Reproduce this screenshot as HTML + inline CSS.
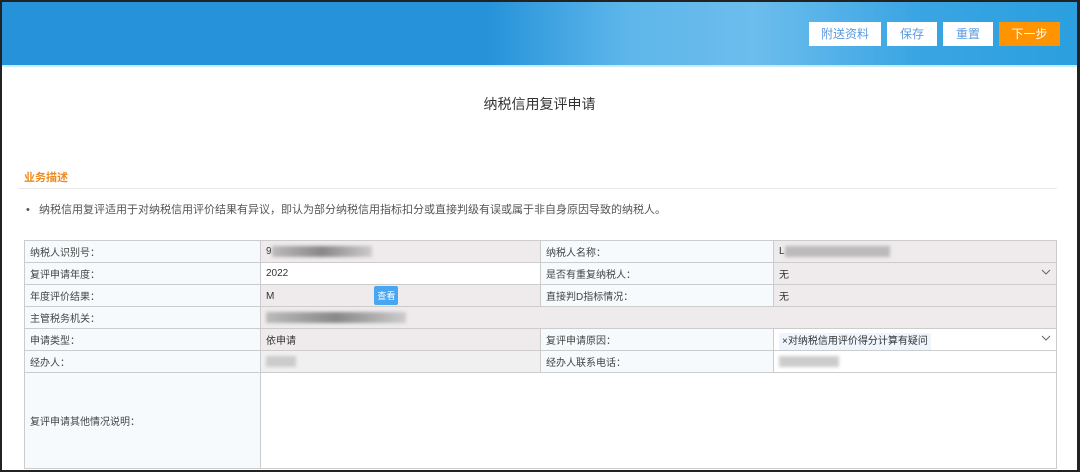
<!DOCTYPE html>
<html><head><meta charset="utf-8"><style>
*{margin:0;padding:0;box-sizing:border-box}
body{width:1080px;height:472px;overflow:hidden;background:#222;font-family:"Liberation Sans","Noto Sans CJK SC",sans-serif;position:relative}
.frame{position:absolute;left:2px;top:2px;width:1075px;height:468px;background:#fff;overflow:hidden}
.hdr{position:absolute;left:0;top:0;width:100%;height:63px;background:linear-gradient(90deg,#2592d9 0%,#2592d9 45%,#5db6ea 58%,#6cbdec 70%,#3aa5e3 85%,#2b9fdf 100%)}
.hdr2{position:absolute;left:0;top:63px;width:100%;height:2px;background:#c9ecf8}
.btn{position:absolute;top:20px;height:24px;background:#fff;color:#5a9be0;font-size:12px;line-height:24px;text-align:center}
.title{position:absolute;top:92px;left:0;width:100%;text-align:center;font-size:14px;color:#333}
.sec{position:absolute;left:22px;top:167px;font-size:11px;color:#f08a1c;font-weight:bold}
.line{position:absolute;left:17px;top:186px;width:1038px;height:1px;background:#e8e8e8}
.desc{position:absolute;left:24px;top:199px;font-size:11px;color:#555}
table{position:absolute;left:22px;top:238px;border-collapse:collapse;font-size:10px;color:#333}
td{border:1px solid #ccc;height:22px;padding:0 5px;vertical-align:middle}
.l{background:#f6fafd;color:#444}
.g{background:#efebec}
.blur{display:inline-block;height:11px;background:linear-gradient(90deg,#bbb,#888,#ccc);filter:blur(1.5px);vertical-align:middle}
.chev{float:right;margin-top:3px}
</style></head><body><div class="frame">
<div class="hdr"></div><div class="hdr2"></div>
<div class="btn" style="left:807px;width:72px">附送资料</div>
<div class="btn" style="left:885px;width:50px">保存</div>
<div class="btn" style="left:941px;width:50px">重置</div>
<div class="btn" style="left:997px;width:61px;background:#ff9300;color:#fff">下一步</div>
<div class="title">纳税信用复评申请</div>
<div class="sec">业务描述</div>
<div class="line"></div>
<div class="desc">• &nbsp;&nbsp;纳税信用复评适用于对纳税信用评价结果有异议，即认为部分纳税信用指标扣分或直接判级有误或属于非自身原因导致的纳税人。</div>
<table>
<tr><td class="l" style="width:236px">纳税人识别号：</td><td class="g" style="width:280px">9<span class="blur" style="width:100px"></span></td><td class="l" style="width:233px">纳税人名称：</td><td class="g" style="width:283px">L<span class="blur" style="width:105px;background:#bbb"></span></td></tr>
<tr><td class="l">复评申请年度：</td><td>2022</td><td class="l">是否有重复纳税人：</td><td class="g">无<svg class="chev" width="10" height="6" viewBox="0 0 10 6"><path d="M1 1L5 5L9 1" stroke="#666" fill="none"/></svg></td></tr>
<tr><td class="l">年度评价结果：</td><td class="g">M<span style="display:inline-block;margin-left:100px;background:#4aa6f0;color:#fff;padding:3px 3px;font-size:9px;border-radius:2px">查看</span></td><td class="l">直接判D指标情况：</td><td class="g">无</td></tr>
<tr><td class="l">主管税务机关：</td><td class="g" colspan="3"><span class="blur" style="width:140px"></span></td></tr>
<tr><td class="l">申请类型：</td><td class="g">依申请</td><td class="l">复评申请原因：</td><td><span style="background:#eef5fd;padding:3px 3px">×对纳税信用评价得分计算有疑问</span><svg class="chev" width="10" height="6" viewBox="0 0 10 6"><path d="M1 1L5 5L9 1" stroke="#666" fill="none"/></svg></td></tr>
<tr><td class="l">经办人：</td><td style="background:#f0f0f0"><span class="blur" style="width:30px;background:#ccc"></span></td><td class="l">经办人联系电话：</td><td><span class="blur" style="width:60px;background:#ccc"></span></td></tr>
<tr><td class="l" style="height:96px">复评申请其他情况说明：</td><td colspan="3"></td></tr>
</table>
</div></body></html>
